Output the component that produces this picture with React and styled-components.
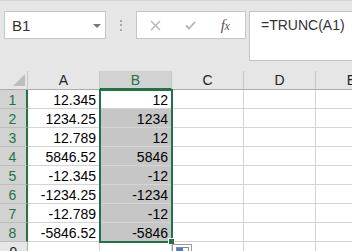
import React from 'react';
import styled, { createGlobalStyle } from 'styled-components';

const GREEN = '#217346';

const GlobalStyle = createGlobalStyle`
  html, body { margin: 0; padding: 0; }
  body {
    width: 352px;
    height: 251px;
    overflow: hidden;
    background: #e6e6e6;
    font-family: "Liberation Sans", Arial, sans-serif;
  }
`;

const Page = styled.div`
  position: relative;
  width: 352px;
  height: 251px;
  overflow: hidden;
  background: #e6e6e6;
`;

const Toolbar = styled.div`
  box-sizing: border-box;
  height: 71px;
  display: flex;
  align-items: flex-start;
  padding: 10px 0 0 4px;
  border-top: 1px solid #d6d6d6;

  & > * { flex-shrink: 0; }
`;

const NameBox = styled.div`
  box-sizing: border-box;
  width: 102px;
  height: 28px;
  background: #fff;
  border: 1px solid #c6c6c6;
  display: flex;
  align-items: center;
  justify-content: space-between;
  padding: 0 4px 0 7px;
  font-size: 15px;
  color: #333;
`;

const Caret = styled.span`
  width: 0;
  height: 0;
  border-left: 4px solid transparent;
  border-right: 4px solid transparent;
  border-top: 4px solid #777;
  margin-top: 1px;
`;

const Dots = styled.div`
  width: 30px;
  height: 28px;
  display: flex;
  flex-direction: column;
  align-items: center;
  justify-content: center;
  gap: 2.5px;

  span {
    width: 2px;
    height: 2px;
    background: #a8a8a8;
  }
`;

const ButtonBox = styled.div`
  box-sizing: border-box;
  width: 110px;
  height: 28px;
  background: #fff;
  border: 1px solid #c6c6c6;
  display: flex;
  align-items: center;
`;

const Slot = styled.div`
  flex: 0 0 ${p => p.$w}px;
  height: 100%;
  display: flex;
  align-items: center;
  justify-content: center;
`;

const Fx = styled.span`
  font-family: "Liberation Serif", "Times New Roman", serif;
  font-style: italic;
  font-size: 15px;
  color: #555;
  letter-spacing: -0.5px;

  small {
    font-size: 12px;
  }
`;

const FormulaBox = styled.div`
  box-sizing: border-box;
  width: 130px;
  height: 50px;
  margin-left: 3px;
  background: #fff;
  border: 1px solid #c6c6c6;
  padding: 5px 0 0 11px;
  font-size: 14px;
  line-height: 16px;
  color: #333;
  white-space: nowrap;
`;

const Row = styled.div`
  display: flex;
  height: 19px;

  & > * { flex-shrink: 0; }
`;

const Corner = styled.div`
  position: relative;
  box-sizing: border-box;
  width: 28px;
  height: 19px;
  border-right: 1px solid #c6c6c6;
  border-bottom: 1px solid #ababab;

  &::after {
    content: '';
    position: absolute;
    right: 2px;
    bottom: 3px;
    width: 0;
    height: 0;
    border-left: 12px solid transparent;
    border-bottom: 12px solid #bdbdbd;
  }
`;

const ColHeader = styled.div`
  box-sizing: border-box;
  width: 72px;
  height: 19px;
  display: flex;
  align-items: flex-end;
  justify-content: center;
  padding-bottom: ${p => (p.$sel ? 1 : 2)}px;
  line-height: 14px;
  font-size: 14px;
  background: ${p => (p.$sel ? '#d2d2d2' : '#e6e6e6')};
  color: ${p => (p.$sel ? GREEN : '#222')};
  border-right: 1px solid #c6c6c6;
  border-bottom: ${p => (p.$sel ? `2px solid ${GREEN}` : '1px solid #ababab')};
`;

const RowHeader = styled.div`
  box-sizing: border-box;
  width: 28px;
  height: 19px;
  display: flex;
  align-items: flex-end;
  justify-content: center;
  padding: 0 ${p => (p.$sel ? 1 : 0)}px 1px 0;
  line-height: 14px;
  font-size: 14px;
  background: ${p => (p.$sel ? '#d2d2d2' : '#e6e6e6')};
  color: ${p => (p.$sel ? GREEN : '#222')};
  border-right: ${p => (p.$sel ? `2px solid ${GREEN}` : '1px solid #ababab')};
  border-bottom: 1px solid #bdbdbd;
`;

const Cell = styled.div`
  box-sizing: border-box;
  width: 72px;
  height: 19px;
  display: flex;
  align-items: flex-end;
  justify-content: flex-end;
  padding: 0 3px 1px 0;
  line-height: 14px;
  font-size: 14px;
  color: #000;
  white-space: nowrap;
  background: ${p => (p.$shade ? '#c6c6c6' : '#fff')};
  border-right: 1px solid #d4d4d4;
  border-bottom: 1px solid #d4d4d4;
`;

const Selection = styled.div`
  position: absolute;
  left: 99px;
  top: 89px;
  width: 74px;
  height: 154px;
  box-sizing: border-box;
  border: 2px solid ${GREEN};
  pointer-events: none;
`;

const Handle = styled.div`
  position: absolute;
  left: 168px;
  top: 238px;
  width: 7px;
  height: 7px;
  box-sizing: border-box;
  background: ${GREEN};
  border: 1px solid #fff;
`;

const QuickIcon = styled.div`
  position: absolute;
  left: 172px;
  top: 244px;
  width: 20px;
  height: 12px;
  box-sizing: border-box;
  background: #fff;
  border: 1px solid #9a9a9a;
  padding: 2px 0 0 3px;

  span {
    display: block;
    width: 13px;
    height: 6px;
    box-sizing: border-box;
    border: 1px solid #8a8a8a;
    background: linear-gradient(90deg, #3f7fe0 0 6px, #fff 6px);
  }
`;

const colA = ['12.345', '1234.25', '12.789', '5846.52', '-12.345', '-1234.25', '-12.789', '-5846.52'];
const colB = ['12', '1234', '12', '5846', '-12', '-1234', '-12', '-5846'];
const cols = ['A', 'B', 'C', 'D', 'E'];

const App = () => {
  const rows = colA.map((a, i) => ({ n: i + 1, a, b: colB[i] }));
  rows.push({ n: 9, a: '', b: '' });

  return (
    <Page>
      <GlobalStyle />
      <Toolbar>
        <NameBox>
          B1
          <Caret />
        </NameBox>
        <Dots><span /><span /><span /></Dots>
        <ButtonBox>
          <Slot $w={37}>
            <svg width="11" height="11" viewBox="0 0 11 11">
              <path d="M1 1 L10 10 M10 1 L1 10" stroke="#b4b4b4" strokeWidth="1.4" fill="none" />
            </svg>
          </Slot>
          <Slot $w={33}>
            <svg width="11" height="9" viewBox="0 0 11 9">
              <path d="M1 4.5 L4 7.5 L10 1" stroke="#b4b4b4" strokeWidth="1.8" fill="none" />
            </svg>
          </Slot>
          <Slot $w={36}>
            <Fx>f<small>x</small></Fx>
          </Slot>
        </ButtonBox>
        <FormulaBox>=TRUNC(A1)</FormulaBox>
      </Toolbar>

      <Row>
        <Corner />
        {cols.map(c => (
          <ColHeader key={c} $sel={c === 'B'}>{c}</ColHeader>
        ))}
      </Row>
      {rows.map(r => {
        const sel = r.n <= 8;
        return (
          <Row key={r.n}>
            <RowHeader $sel={sel}>{r.n}</RowHeader>
            <Cell>{r.a}</Cell>
            <Cell $shade={sel && r.n > 1}>{r.b}</Cell>
            <Cell />
            <Cell />
            <Cell />
          </Row>
        );
      })}

      <Selection />
      <Handle />
      <QuickIcon><span /></QuickIcon>
    </Page>
  );
};

export default App;
